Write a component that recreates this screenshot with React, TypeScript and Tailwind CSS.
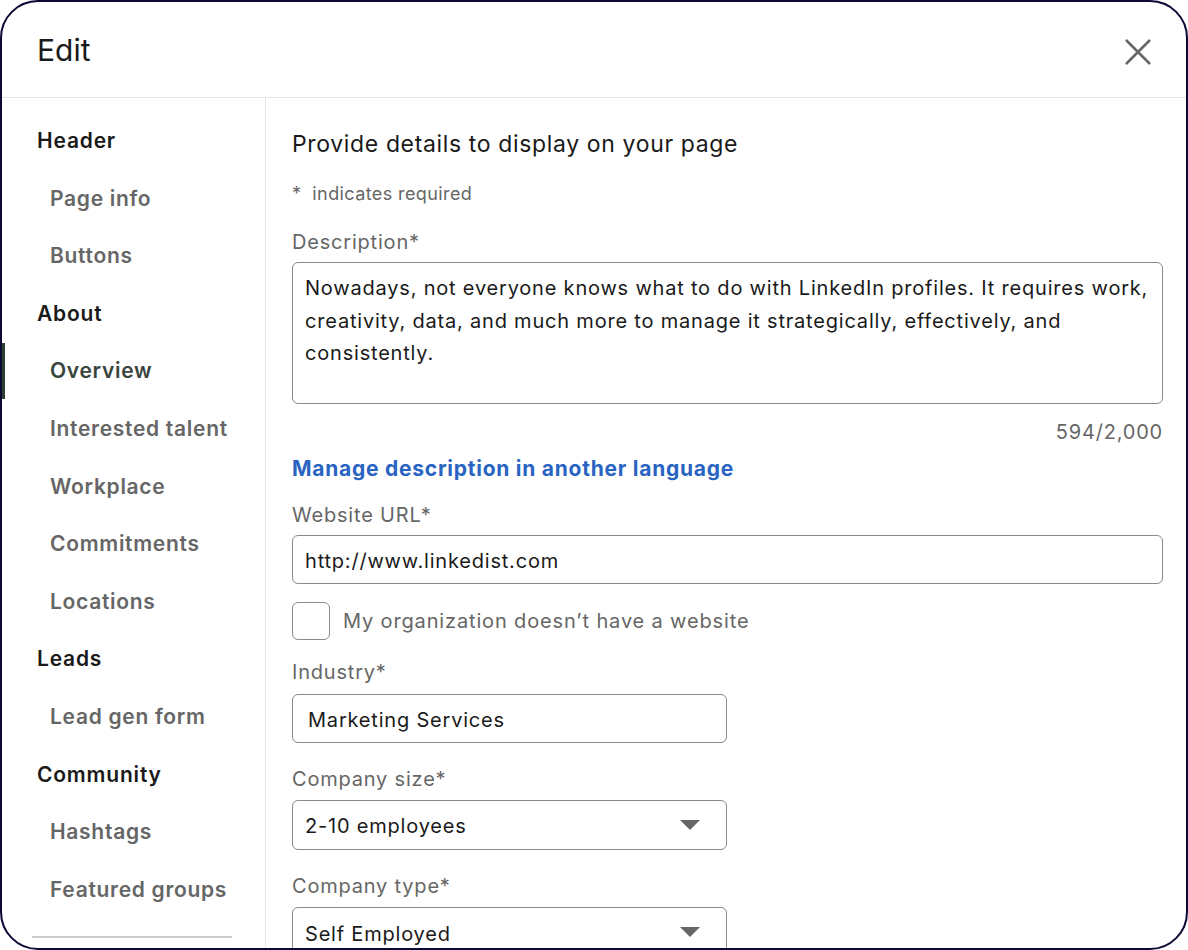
import React from "react";

const font = { fontFamily: "Inter, 'Noto Sans', sans-serif" };

function NavHead({ children }: { children: React.ReactNode }) {
  return (
    <div className="h-[57.6px] flex items-center pl-[35px] text-[21px] tracking-[0.8px] font-semibold text-[#1a1a1a]">
      {children}
    </div>
  );
}

function NavItem({ children, active }: { children: React.ReactNode; active?: boolean }) {
  return (
    <div
      className={
        "relative h-[57.6px] flex items-center pl-[48px] text-[21px] tracking-[0.7px] font-semibold " +
        (active ? "text-[#38443c]" : "text-[#666666]")
      }
    >
      {active && <div className="absolute left-0 top-[1px] bottom-[1px] w-[3px] bg-[#2f3e35]" />}
      {children}
    </div>
  );
}

function Caret() {
  return (
    <svg width="20" height="11" viewBox="0 0 20 11" className="shrink-0">
      <path d="M0 0 L20 0 L10 10 Z" fill="#666666" />
    </svg>
  );
}

const label = "text-[20px] tracking-[0.8px] leading-[24px] text-[#666666]";
const field = "text-[20px] tracking-[0.8px] text-[#1a1a1a]";

export default function App() {
  return (
    <div className="w-[1188px] h-[950px] bg-white" style={font}>
      <div className="w-full h-full rounded-[38px] border-2 border-[#0b0836] overflow-hidden flex flex-col bg-white">
        <div className="h-[96px] shrink-0 border-b border-[#e6e6e6] flex items-center justify-between pl-[35px] pr-[35px]">
          <div className="text-[30px] text-[#1a1a1a] leading-none">Edit</div>
          <svg width="26" height="26" viewBox="0 0 26 26" className="mt-[4px]">
            <path d="M1 1 L25 25 M25 1 L1 25" stroke="#666666" strokeWidth="2.6" strokeLinecap="butt" />
          </svg>
        </div>
        <div className="flex flex-1 min-h-0">
          <div className="w-[264px] shrink-0 border-r border-[#e6e6e6] pt-[14px]">
            <NavHead>Header</NavHead>
            <NavItem>Page info</NavItem>
            <NavItem>Buttons</NavItem>
            <NavHead>About</NavHead>
            <NavItem active>Overview</NavItem>
            <NavItem>Interested talent</NavItem>
            <NavItem>Workplace</NavItem>
            <NavItem>Commitments</NavItem>
            <NavItem>Locations</NavItem>
            <NavHead>Leads</NavHead>
            <NavItem>Lead gen form</NavItem>
            <NavHead>Community</NavHead>
            <NavItem>Hashtags</NavItem>
            <NavItem>Featured groups</NavItem>
            <div className="mt-[18px] ml-[30px] w-[200px] h-[2px] bg-[#cccccc]" />
          </div>
          <div className="flex-1 min-w-0 pl-[26px] pr-[23px] pt-[32px]">
            <div className="text-[23px] tracking-[0.64px] leading-[28px] text-[#1a1a1a]">Provide details to display on your page</div>
            <div className="mt-[24px] text-[18px] tracking-[0.4px] leading-[24px] text-[#666666]">*&nbsp; indicates required</div>
            <div className={"mt-[24px] " + label}>Description*</div>
            <div className={"mt-[8px] h-[142px] rounded-[6px] border-[1.5px] border-[#8a8a8a] px-[12px] pt-[9px] leading-[32.5px] whitespace-nowrap " + field}>
              <div>Nowadays, not everyone knows what to do with LinkedIn profiles. It requires work,</div>
              <div>creativity, data, and much more to manage it strategically, effectively, and</div>
              <div>consistently.</div>
            </div>
            <div className={"mt-[16px] text-right " + label}>594/2,000</div>
            <div className="mt-[13px] text-[21px] tracking-[0.75px] leading-[24px] font-bold text-[#2a64c2]">
              Manage description in another language
            </div>
            <div className={"mt-[22px] " + label}>Website URL*</div>
            <div className={"mt-[8px] h-[49px] rounded-[6px] border-[1.5px] border-[#8a8a8a] px-[12px] pt-[3px] flex items-center " + field}>
              http://www.linkedist.com
            </div>
            <div className="mt-[18px] flex items-center gap-[13px]">
              <div className="w-[38px] h-[38px] rounded-[6px] border-[1.5px] border-[#8a8a8a] shrink-0" />
              <div className="text-[20px] tracking-[0.85px] text-[#666666]">My organization doesn’t have a website</div>
            </div>
            <div className={"mt-[20px] " + label}>Industry*</div>
            <div className={"mt-[10px] w-[435px] h-[49px] rounded-[6px] border-[1.5px] border-[#8a8a8a] px-[15px] pt-[3px] flex items-center " + field}>
              Marketing Services
            </div>
            <div className={"mt-[24px] " + label}>Company size*</div>
            <div className={"mt-[9px] w-[435px] h-[50px] rounded-[6px] border-[1.5px] border-[#8a8a8a] pl-[12px] pr-[26px] flex items-center justify-between " + field}>
              <span className="pt-[2px]">2-10 employees</span>
              <Caret />
            </div>
            <div className={"mt-[24px] " + label}>Company type*</div>
            <div className={"mt-[9px] w-[435px] h-[50px] rounded-[6px] border-[1.5px] border-[#8a8a8a] pl-[12px] pr-[26px] flex items-center justify-between " + field}>
              <span className="pt-[3px]">Self Employed</span>
              <Caret />
            </div>
          </div>
        </div>
      </div>
    </div>
  );
}
